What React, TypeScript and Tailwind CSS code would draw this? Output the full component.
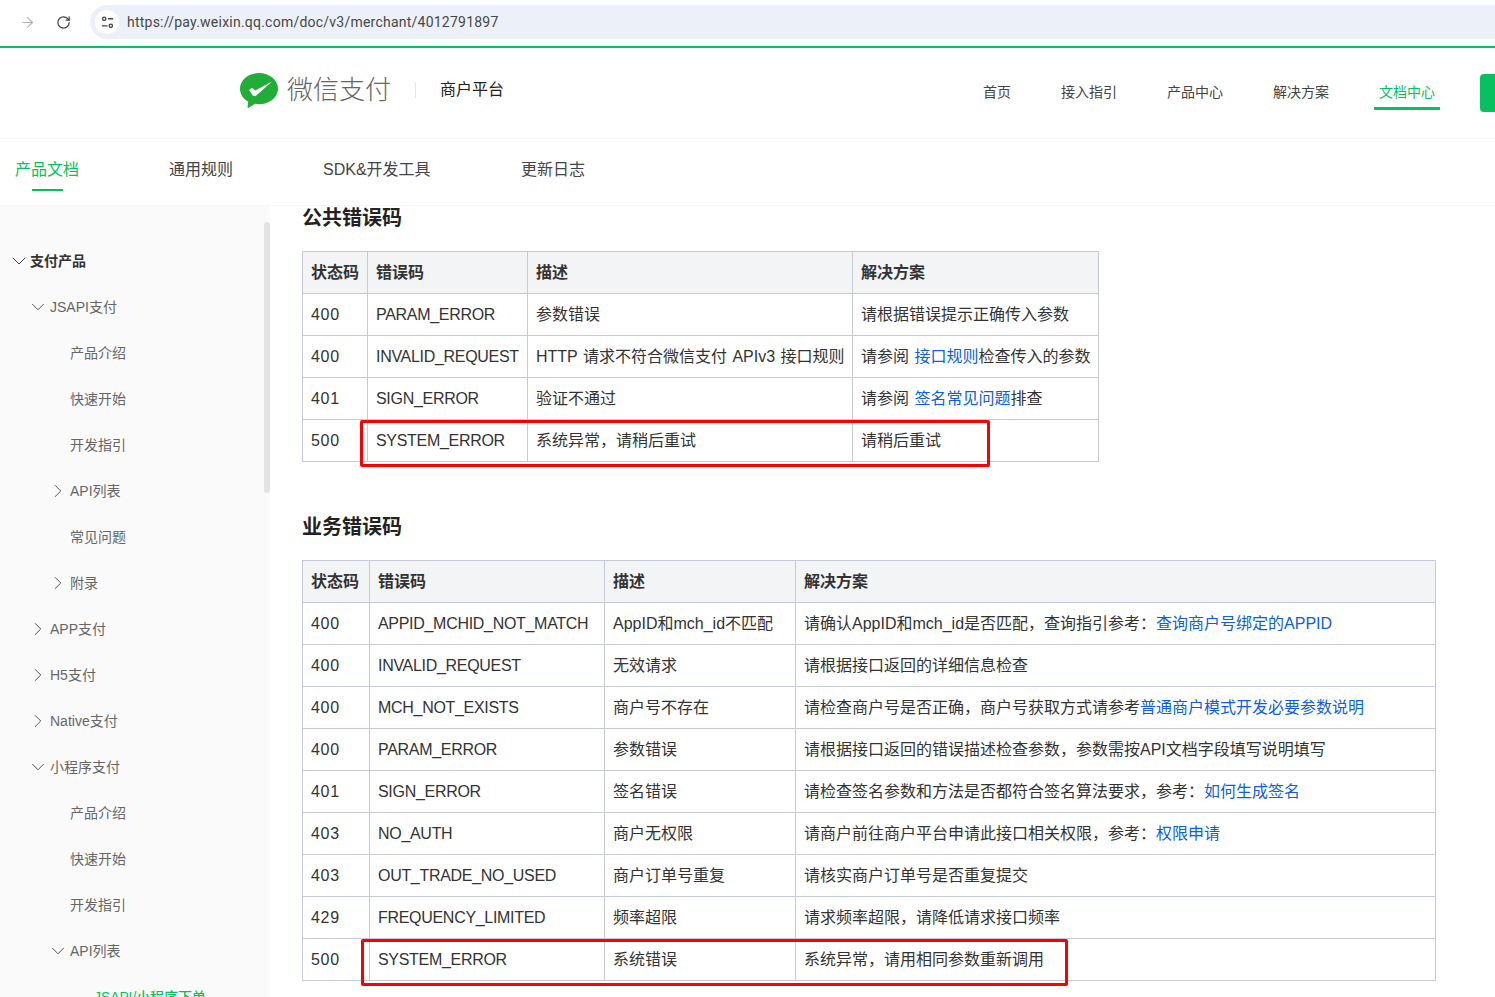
import { ArrowRight, ChevronDown, ChevronRight, RotateCw } from "lucide-react";
import type { ReactNode } from "react";

type SideItem = {
  label: string;
  level: 0 | 1 | 2 | 3;
  arrow?: "open" | "closed";
};

const sideItems: SideItem[] = [
  { label: "支付产品", level: 0, arrow: "open" },
  { label: "JSAPI支付", level: 1, arrow: "open" },
  { label: "产品介绍", level: 2 },
  { label: "快速开始", level: 2 },
  { label: "开发指引", level: 2 },
  { label: "API列表", level: 2, arrow: "closed" },
  { label: "常见问题", level: 2 },
  { label: "附录", level: 2, arrow: "closed" },
  { label: "APP支付", level: 1, arrow: "closed" },
  { label: "H5支付", level: 1, arrow: "closed" },
  { label: "Native支付", level: 1, arrow: "closed" },
  { label: "小程序支付", level: 1, arrow: "open" },
  { label: "产品介绍", level: 2 },
  { label: "快速开始", level: 2 },
  { label: "开发指引", level: 2 },
  { label: "API列表", level: 2, arrow: "open" },
  { label: "JSAPI/小程序下单", level: 3 },
];

const navLinks = ["首页", "接入指引", "产品中心", "解决方案"];

const Link = ({ children }: { children: ReactNode }) => (
  <span className="text-[#0b5fe0]">{children}</span>
);

const publicRows: ReactNode[][] = [
  ["400", "PARAM_ERROR", "参数错误", "请根据错误提示正确传入参数"],
  [
    "400",
    "INVALID_REQUEST",
    "HTTP 请求不符合微信支付 APIv3 接口规则",
    <>
      请参阅 <Link>接口规则</Link>检查传入的参数
    </>,
  ],
  [
    "401",
    "SIGN_ERROR",
    "验证不通过",
    <>
      请参阅 <Link>签名常见问题</Link>排查
    </>,
  ],
  ["500", "SYSTEM_ERROR", "系统异常，请稍后重试", "请稍后重试"],
];

const bizRows: ReactNode[][] = [
  [
    "400",
    "APPID_MCHID_NOT_MATCH",
    "AppID和mch_id不匹配",
    <>
      请确认AppID和mch_id是否匹配，查询指引参考：<Link>查询商户号绑定的APPID</Link>
    </>,
  ],
  ["400", "INVALID_REQUEST", "无效请求", "请根据接口返回的详细信息检查"],
  [
    "400",
    "MCH_NOT_EXISTS",
    "商户号不存在",
    <>
      请检查商户号是否正确，商户号获取方式请参考<Link>普通商户模式开发必要参数说明</Link>
    </>,
  ],
  ["400", "PARAM_ERROR", "参数错误", "请根据接口返回的错误描述检查参数，参数需按API文档字段填写说明填写"],
  [
    "401",
    "SIGN_ERROR",
    "签名错误",
    <>
      请检查签名参数和方法是否都符合签名算法要求，参考：<Link>如何生成签名</Link>
    </>,
  ],
  [
    "403",
    "NO_AUTH",
    "商户无权限",
    <>
      请商户前往商户平台申请此接口相关权限，参考：<Link>权限申请</Link>
    </>,
  ],
  ["403", "OUT_TRADE_NO_USED", "商户订单号重复", "请核实商户订单号是否重复提交"],
  ["429", "FREQUENCY_LIMITED", "频率超限", "请求频率超限，请降低请求接口频率"],
  ["500", "SYSTEM_ERROR", "系统错误", "系统异常，请用相同参数重新调用"],
];

function WechatPayLogo() {
  return (
    <svg viewBox="0 0 38 35" className="h-[35px] w-[38px]">
      <path
        d="M19 0C8.500 0 0 7 0 15.700c0 5.400 3.200 10.100 8.200 12.900l-.6 5.600c-.1.700.5 1 1.100.6l6.300-4c1.300.2 2.600.4 4 .4 10.500 0 19-7 19-15.500C38 7 29.500 0 19 0Z"
        fill="#22ac38"
      />
      <path d="M9 17l2.800-2.200 3.500 2.600L32 8.500 15.500 23.200l-2.800-.8Z" fill="#fff" />
    </svg>
  );
}

function ErrorTable({
  widths,
  rows,
  className,
}: {
  widths: number[];
  rows: ReactNode[][];
  className: string;
}) {
  const heads = ["状态码", "错误码", "描述", "解决方案"];
  const cellText = ["tracking-[0.7px]", "tracking-[-0.3px]", "[word-spacing:1px]", "[word-spacing:1px]"];
  return (
    <table className={`table-fixed border-collapse text-[16px] text-[#333] ${className}`}>
      <colgroup>
        {widths.map((w) => (
          <col key={w} style={{ width: w }} />
        ))}
      </colgroup>
      <thead>
        <tr className="h-[42px] bg-[#f3f4f6]">
          {heads.map((h) => (
            <th key={h} className="border border-[#c5cad6] px-2 text-left font-bold text-[#333]">
              {h}
            </th>
          ))}
        </tr>
      </thead>
      <tbody>
        {rows.map((row, i) => (
          <tr key={i} className="h-[42px]">
            {row.map((cell, j) => (
              <td key={j} className={`whitespace-nowrap border border-[#c5cad6] px-2 ${cellText[j]}`}>
                {cell}
              </td>
            ))}
          </tr>
        ))}
      </tbody>
    </table>
  );
}

function Sidebar() {
  const pad = ["pl-[12px]", "pl-[32px]", "pl-[52px]", "pl-[94px]"];
  return (
    <aside className="relative h-[791px] w-[270px] shrink-0 overflow-hidden bg-[#fafafa] pt-[32px]">
      {sideItems.map((item, i) => (
        <div key={i} className={`flex h-[46px] items-center text-[14px] ${pad[item.level]}`}>
          <span className="flex w-[18px] shrink-0 justify-start">
            {item.arrow === "open" && (
              <ChevronDown size={item.level === 0 ? 24 : 22} strokeWidth={1} className="-ml-[5px] shrink-0 text-[#444]" />
            )}
            {item.arrow === "closed" && (
              <ChevronRight size={22} strokeWidth={1} className="-ml-[5px] shrink-0 text-[#444]" />
            )}
          </span>
          <span
            className={
              item.level === 0
                ? "font-bold text-[#333]"
                : item.level === 3
                  ? "-ml-[18px] font-medium tracking-[-0.1px] whitespace-nowrap text-[#07c160]"
                  : "text-[#666]"
            }
          >
            {item.label}
          </span>
        </div>
      ))}
      <div className="absolute top-[16px] right-0 h-[271px] w-[6px] rounded-[3px] bg-[#e3e3e3]" />
    </aside>
  );
}

export default function App() {
  return (
    <div className="relative h-[997px] w-[1495px] overflow-hidden bg-white font-['Liberation_Sans','Noto_Sans_CJK_SC',sans-serif]">
      {/* browser bar */}
      <div className="flex h-[46px] items-center bg-white pb-[2px] pl-[19px]">
        <ArrowRight size={17} strokeWidth={1.5} className="text-[#b4b4b4]" />
        <RotateCw size={15} strokeWidth={2} className="ml-[20px] text-[#444]" />
        <div className="ml-[19px] flex h-[34px] flex-1 items-center rounded-l-full bg-[#ecf1f9] pl-[5px]">
          <span className="flex h-[24px] w-[24px] items-center justify-center rounded-full bg-white">
            <svg viewBox="0 0 16 16" className="h-[15px] w-[15px]" fill="none" stroke="#444" strokeWidth="1.4">
              <circle cx="4.500" cy="4" r="1.800" />
              <path d="M8.500 4H14M2 11.500h6" />
              <circle cx="11.500" cy="11.500" r="1.800" />
            </svg>
          </span>
          <span className="ml-[8px] font-['Roboto',sans-serif] text-[14px] tracking-[0.23px] text-[#474747]">
            https://pay.weixin.qq.com/doc/v3/merchant/4012791897
          </span>
        </div>
      </div>
      <div className="h-[2px] bg-[#07c160]" />

      {/* site header */}
      <header className="relative flex h-[91px] items-center border-b border-[#f6f6f6] pl-[240px]">
        <div className="mb-[6px] flex items-center">
          <WechatPayLogo />
          <span className="ml-[9px] text-[26px] font-light text-[#666]">微信支付</span>
          <span className="ml-[24px] h-[16px] w-px bg-[#e6e6e6]" />
          <span className="ml-[24px] text-[16px] text-[#222]">商户平台</span>
        </div>
        <nav className="absolute top-[26px] left-[983px] flex items-start gap-[50px] text-[14px] text-[#444]">
          {navLinks.map((n) => (
            <span key={n} className="leading-[36px]">
              {n}
            </span>
          ))}
          <span className="relative leading-[36px] text-[#07c160]">
            文档中心
            <span className="absolute top-[33px] -left-[5px] h-[3px] w-[66px] bg-[#07c160]" />
          </span>
        </nav>
        <div className="absolute top-[26px] right-0 h-[38px] w-[15px] rounded-l-[4px] bg-[#07c160]" />
      </header>

      {/* doc tabs */}
      <div className="relative z-10 flex h-[67px] items-center gap-[90px] border-b border-[#f6f6f6] bg-white pb-[4px] pl-[15px] text-[16px] text-[#444]">
        <span className="relative text-[#07c160]">
          产品文档
          <span className="absolute top-[31px] left-[17px] h-[2px] w-[31px] bg-[#07c160]" />
        </span>
        <span>通用规则</span>
        <span className="w-[108px] whitespace-nowrap">SDK&amp;开发工具</span>
        <span>更新日志</span>
      </div>

      <div className="flex">
        <Sidebar />
        <main className="relative pl-[32px]">
          <h2 className="mt-[1px] text-[20px] leading-[22px] font-bold text-[#222]">公共错误码</h2>
          <ErrorTable widths={[65, 160, 325, 246]} rows={publicRows} className="mt-[22px] w-[796px]" />
          <h2 className="mt-[54px] text-[20px] leading-[22px] font-bold text-[#222]">业务错误码</h2>
          <ErrorTable widths={[67, 235, 191, 640]} rows={bizRows} className="mt-[22px] w-[1133px]" />
          {/* red annotation boxes */}
          <div className="absolute top-[214px] left-[90px] h-[47px] w-[630px] rounded-[2px] border-[3px] border-[#fb0000]" />
          <div className="absolute top-[733px] left-[91px] h-[47px] w-[707px] rounded-[2px] border-[3px] border-[#fb0000]" />
        </main>
      </div>
    </div>
  );
}
